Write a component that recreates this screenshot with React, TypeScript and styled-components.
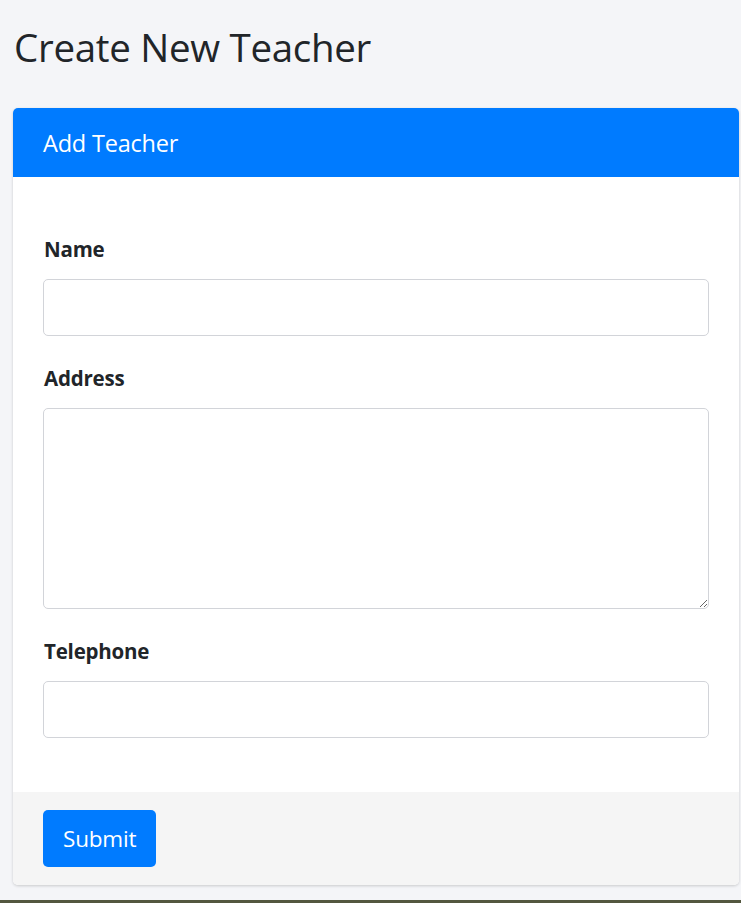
import styled, { createGlobalStyle } from "styled-components";

const GlobalStyle = createGlobalStyle`
    html, body {
        margin: 0;
        padding: 0;
        background: #f4f5f8;
        font-family: "Open Sans", "Noto Sans", sans-serif;
        color: #212529;
    }
    * {
        box-sizing: border-box;
    }
`;

const Page = styled.div`
    min-height: 903px;
    display: flex;
    flex-direction: column;
`;

const Content = styled.main`
    padding: 23px 2px 0 13px;
`;

const Title = styled.h1`
    margin: 0 0 37px 1px;
    font-size: 38.5px;
    font-weight: 400;
    line-height: 48px;
    letter-spacing: -0.3px;
`;

const Card = styled.section`
    background: #fff;
    border-radius: 5px;
    box-shadow: 0 1px 3px rgba(0, 0, 0, 0.18);
    overflow: hidden;
`;

const CardHeader = styled.header`
    height: 69px;
    display: flex;
    align-items: center;
    padding: 0 30px;
    background: #007bff;
    color: #fff;
    font-size: 23.5px;
    letter-spacing: -0.2px;
`;

const CardBody = styled.div`
    padding: 60px 30px 54px;
    display: flex;
    flex-direction: column;
    gap: 30px;
`;

const Field = styled.div`
    display: flex;
    flex-direction: column;
    gap: 18px;
`;

const Label = styled.label`
    font-size: 20.5px;
    font-weight: 700;
    line-height: 24px;
    padding-left: 1px;
    letter-spacing: -0.2px;
`;

const Input = styled.input`
    height: 57px;
    width: 100%;
    border: 1px solid #d2d4d9;
    border-radius: 5px;
    padding: 0 14px;
    font: inherit;
    font-size: 18px;
    outline: none;
`;

const TextArea = styled.textarea`
    height: 201px;
    width: 100%;
    border: 1px solid #d2d4d9;
    border-radius: 5px;
    padding: 12px 14px;
    font: inherit;
    font-size: 18px;
    outline: none;
    resize: vertical;
`;

const CardFooter = styled.footer`
    background: #f5f5f5;
    padding: 18px 30px;
`;

const Button = styled.button`
    height: 57px;
    padding: 0 20px;
    border: none;
    border-radius: 5px;
    background: #007bff;
    color: #fff;
    font-family: inherit;
    font-size: 22.5px;
    letter-spacing: -0.2px;
    cursor: pointer;
`;

const BottomEdge = styled.div`
    margin-top: auto;
    height: 3px;
    background: #53573f;
`;

export default function App() {
    return (
        <Page>
            <GlobalStyle />
            <Content>
                <Title>Create New Teacher</Title>
                <Card>
                    <CardHeader>Add Teacher</CardHeader>
                    <CardBody>
                        <Field>
                            <Label htmlFor="name">Name</Label>
                            <Input id="name" type="text" />
                        </Field>
                        <Field>
                            <Label htmlFor="address">Address</Label>
                            <TextArea id="address" />
                        </Field>
                        <Field>
                            <Label htmlFor="telephone">Telephone</Label>
                            <Input id="telephone" type="tel" />
                        </Field>
                    </CardBody>
                    <CardFooter>
                        <Button type="submit">Submit</Button>
                    </CardFooter>
                </Card>
            </Content>
            <BottomEdge />
        </Page>
    );
}
